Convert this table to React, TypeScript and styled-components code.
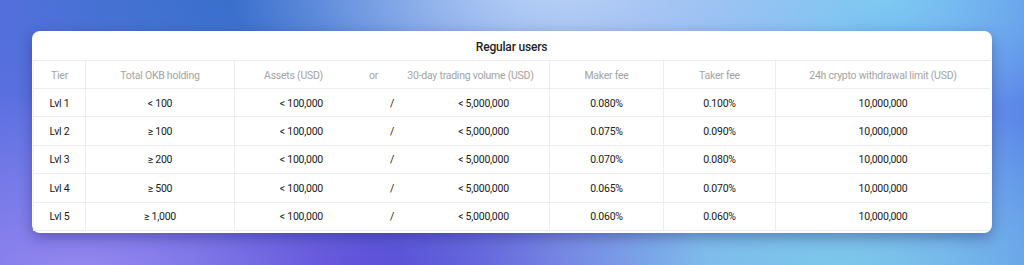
import React from "react";
import styled, { createGlobalStyle } from "styled-components";

const Global = createGlobalStyle`
  html, body { margin: 0; padding: 0; }
  body {
    width: 1024px;
    height: 265px;
    overflow: hidden;
    font-family: Roboto, "Noto Sans", "Liberation Sans", sans-serif;
    background:
      radial-gradient(ellipse 320px 200px at 80px 290px, #9a8af2 0%, rgba(154,138,242,0) 100%),
      radial-gradient(ellipse 380px 160px at 330px 275px, #5a45d6 0%, rgba(90,69,214,0) 100%),
      radial-gradient(ellipse 360px 170px at 840px 270px, #7cc8ea 0%, rgba(124,200,234,0) 100%),
      radial-gradient(ellipse 330px 140px at 560px -10px, #b6d0f6 0%, rgba(182,208,246,0) 100%),
      radial-gradient(ellipse 260px 120px at 880px 0px, #7ccaf2 0%, rgba(124,202,242,0) 100%),
      radial-gradient(ellipse 300px 150px at 230px 0px, #3a6fcc 0%, rgba(58,111,204,0) 100%),
      linear-gradient(90deg, #5b6fe0 0%, #4d7fdc 30%, #8aa8ec 55%, #7aaaf0 80%, #5b88e8 100%);
  }
`;

const Page = styled.div`
  padding: 31px 32px 0 32px;
`;

const Card = styled.div`
  width: 960px;
  box-sizing: border-box;
  background: #ffffff;
  border-radius: 8px;
  box-shadow: 0 5px 14px rgba(30, 20, 90, 0.35);
  padding: 0 2px 2px 1px;
  display: flex;
  flex-direction: column;
`;

const Title = styled.div`
  height: 30px;
  display: flex;
  align-items: center;
  justify-content: center;
  padding-top: 2px;
  font-size: 12px;
  font-weight: 500;
  letter-spacing: -0.2px;
  color: #1f1f1f;
  border-bottom: 1px solid #ededed;
  box-sizing: border-box;
`;

const Row = styled.div<{ $h: number }>`
  display: grid;
  grid-template-columns: 52px 149px 111px 55px 149px 114px 112px 1fr;
  height: ${(p) => p.$h}px;
  border-bottom: 1px solid #ededed;
  box-sizing: border-box;
  border-left: 1px solid #f2f2f2;
`;

const Cell = styled.div<{
  $header?: boolean;
  $align?: "left" | "center" | "right";
  $padL?: number;
  $padR?: number;
  $divider?: boolean;
}>`
  display: flex;
  align-items: center;
  justify-content: ${(p) =>
    p.$align === "left" ? "flex-start" : p.$align === "right" ? "flex-end" : "center"};
  padding-left: ${(p) => p.$padL ?? 0}px;
  padding-right: ${(p) => p.$padR ?? 0}px;
  padding-top: 1px;
  border-right: ${(p) => (p.$divider ? "1px solid #ededed" : "none")};
  font-size: 10.5px;
  letter-spacing: -0.25px;
  color: ${(p) => (p.$header ? "#a3a3a3" : "#202020")};
  white-space: nowrap;
`;

type Tier = {
  lvl: string;
  okb: string;
  assets: string;
  volume: string;
  maker: string;
  taker: string;
  limit: string;
};

const tiers: Tier[] = [
  { lvl: "Lvl 1", okb: "< 100", assets: "< 100,000", volume: "< 5,000,000", maker: "0.080%", taker: "0.100%", limit: "10,000,000" },
  { lvl: "Lvl 2", okb: "≥ 100", assets: "< 100,000", volume: "< 5,000,000", maker: "0.075%", taker: "0.090%", limit: "10,000,000" },
  { lvl: "Lvl 3", okb: "≥ 200", assets: "< 100,000", volume: "< 5,000,000", maker: "0.070%", taker: "0.080%", limit: "10,000,000" },
  { lvl: "Lvl 4", okb: "≥ 500", assets: "< 100,000", volume: "< 5,000,000", maker: "0.065%", taker: "0.070%", limit: "10,000,000" },
  { lvl: "Lvl 5", okb: "≥ 1,000", assets: "< 100,000", volume: "< 5,000,000", maker: "0.060%", taker: "0.060%", limit: "10,000,000" },
];

export default function App() {
  return (
    <>
      <Global />
      <Page>
        <Card>
          <Title>Regular users</Title>
          <Row $h={28}>
            <Cell $header $divider>Tier</Cell>
            <Cell $header $divider>Total OKB holding</Cell>
            <Cell $header $align="right" $padR={23}>Assets (USD)</Cell>
            <Cell $header>or</Cell>
            <Cell $header $padR={9} $divider>30-day trading volume (USD)</Cell>
            <Cell $header $divider>Maker fee</Cell>
            <Cell $header $divider>Taker fee</Cell>
            <Cell $header>24h crypto withdrawal limit (USD)</Cell>
          </Row>
          {tiers.map((t) => (
            <Row key={t.lvl} $h={28.4}>
              <Cell $divider>{t.lvl}</Cell>
              <Cell $divider>{t.okb}</Cell>
              <Cell $align="right" $padR={23}>{t.assets}</Cell>
              <Cell $align="right" $padR={7}>/</Cell>
              <Cell $padL={17} $divider>{t.volume}</Cell>
              <Cell $divider>{t.maker}</Cell>
              <Cell $divider>{t.taker}</Cell>
              <Cell>{t.limit}</Cell>
            </Row>
          ))}
        </Card>
      </Page>
    </>
  );
}
